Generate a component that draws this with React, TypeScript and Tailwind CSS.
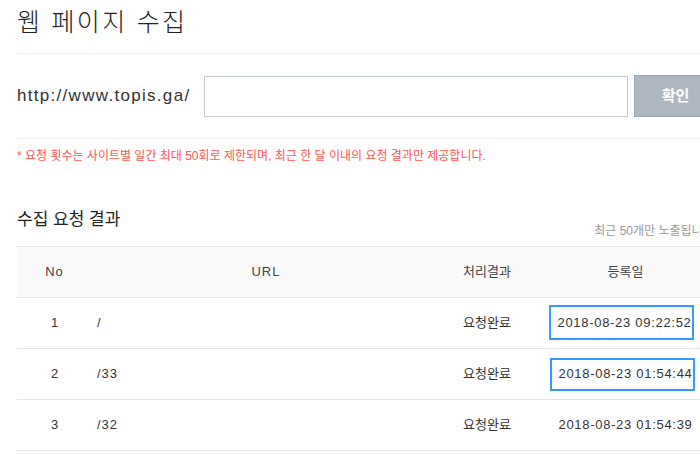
import React from 'react';

const rows = [
    { no: 1, url: '/', status: '요청완료', date: '2018-08-23 09:22:52', mark: 'a' },
    { no: 2, url: '/33', status: '요청완료', date: '2018-08-23 01:54:44', mark: 'b' },
    { no: 3, url: '/32', status: '요청완료', date: '2018-08-23 01:54:39', mark: '' },
];

const font = { fontFamily: '"Liberation Sans", "Noto Sans CJK KR", sans-serif' };

export default function App() {
    return (
        <div className="w-[700px] h-[454px] overflow-hidden bg-white text-[#333]" style={font}>
            <div className="w-[734px] pl-[17px]">
                {/* page title */}
                <div className="h-[54px] flex items-center border-b border-[#eeeeee]">
                    <h1 className="text-[25px] leading-[30px] tracking-[2.3px] font-light text-[#222] -mt-[10px]">웹 페이지 수집</h1>
                </div>

                {/* url form */}
                <div className="flex items-center py-[21px] border-b border-[#eeeeee]">
                    <span className="text-[17px] tracking-[1.3px] text-[#333] w-[187px]">http://www.topis.ga/</span>
                    <input
                        type="text"
                        className="w-[424px] h-[41px] border border-[#c7ccd4] bg-white outline-none px-2"
                    />
                    <button className="ml-[6px] w-[83px] h-[42px] bg-[#adb6c1] border border-[#9ea7b2] text-white text-[15px] font-bold">
                        확인
                    </button>
                </div>

                <p className="mt-[8px] text-[12px] leading-[18px] text-[#ff5555]">
                    * 요청 횟수는 사이트별 일간 최대 50회로 제한되며, 최근 한 달 이내의 요청 결과만 제공합니다.
                </p>

                {/* results */}
                <div className="mt-[43px] w-[700px] h-[38px] flex justify-between">
                    <h2 className="text-[17px] leading-[24px] text-[#222] self-start">수집 요청 결과</h2>
                    <span className="text-[12px] leading-[16px] text-[#999] self-end pb-[7px]">최근 50개만 노출됩니다.</span>
                </div>

                <table className="w-[700px] border-collapse text-[13px] table-fixed">
                    <colgroup>
                        <col className="w-[75px]" />
                        <col className="w-[348px]" />
                        <col className="w-[94px]" />
                        <col className="w-[183px]" />
                    </colgroup>
                    <thead>
                        <tr className="h-[51px] bg-[#f9f9f9] border-t border-b border-[#e5e5e5] text-[#444]">
                            <th className="font-normal text-center tracking-[1px]">No</th>
                            <th className="font-normal text-center tracking-[1px]">URL</th>
                            <th className="font-normal text-center">처리결과</th>
                            <th className="font-normal text-center">등록일</th>
                        </tr>
                    </thead>
                    <tbody>
                        {rows.map((r) => (
                            <tr key={r.no} className="h-[51px] border-b border-[#e5e5e5]">
                                <td className="text-center">{r.no}</td>
                                <td className="text-left pl-[5px] tracking-[1px]">{r.url}</td>
                                <td className="text-center">{r.status}</td>
                                <td className="text-center">
                                    {r.mark ? (
                                        <span
                                            className={`inline-flex items-center border-2 border-[#3399ff] pl-[6px] pr-0 mr-[8px] tracking-[0.7px] ${
                                                r.mark === 'a' ? 'h-[35px] mt-[-1px]' : 'h-[33px] ml-[2px]'
                                            }`}
                                        >
                                            {r.date}
                                        </span>
                                    ) : (
                                        <span className="tracking-[0.7px]">{r.date}</span>
                                    )}
                                </td>
                            </tr>
                        ))}
                    </tbody>
                </table>
            </div>
        </div>
    );
}
